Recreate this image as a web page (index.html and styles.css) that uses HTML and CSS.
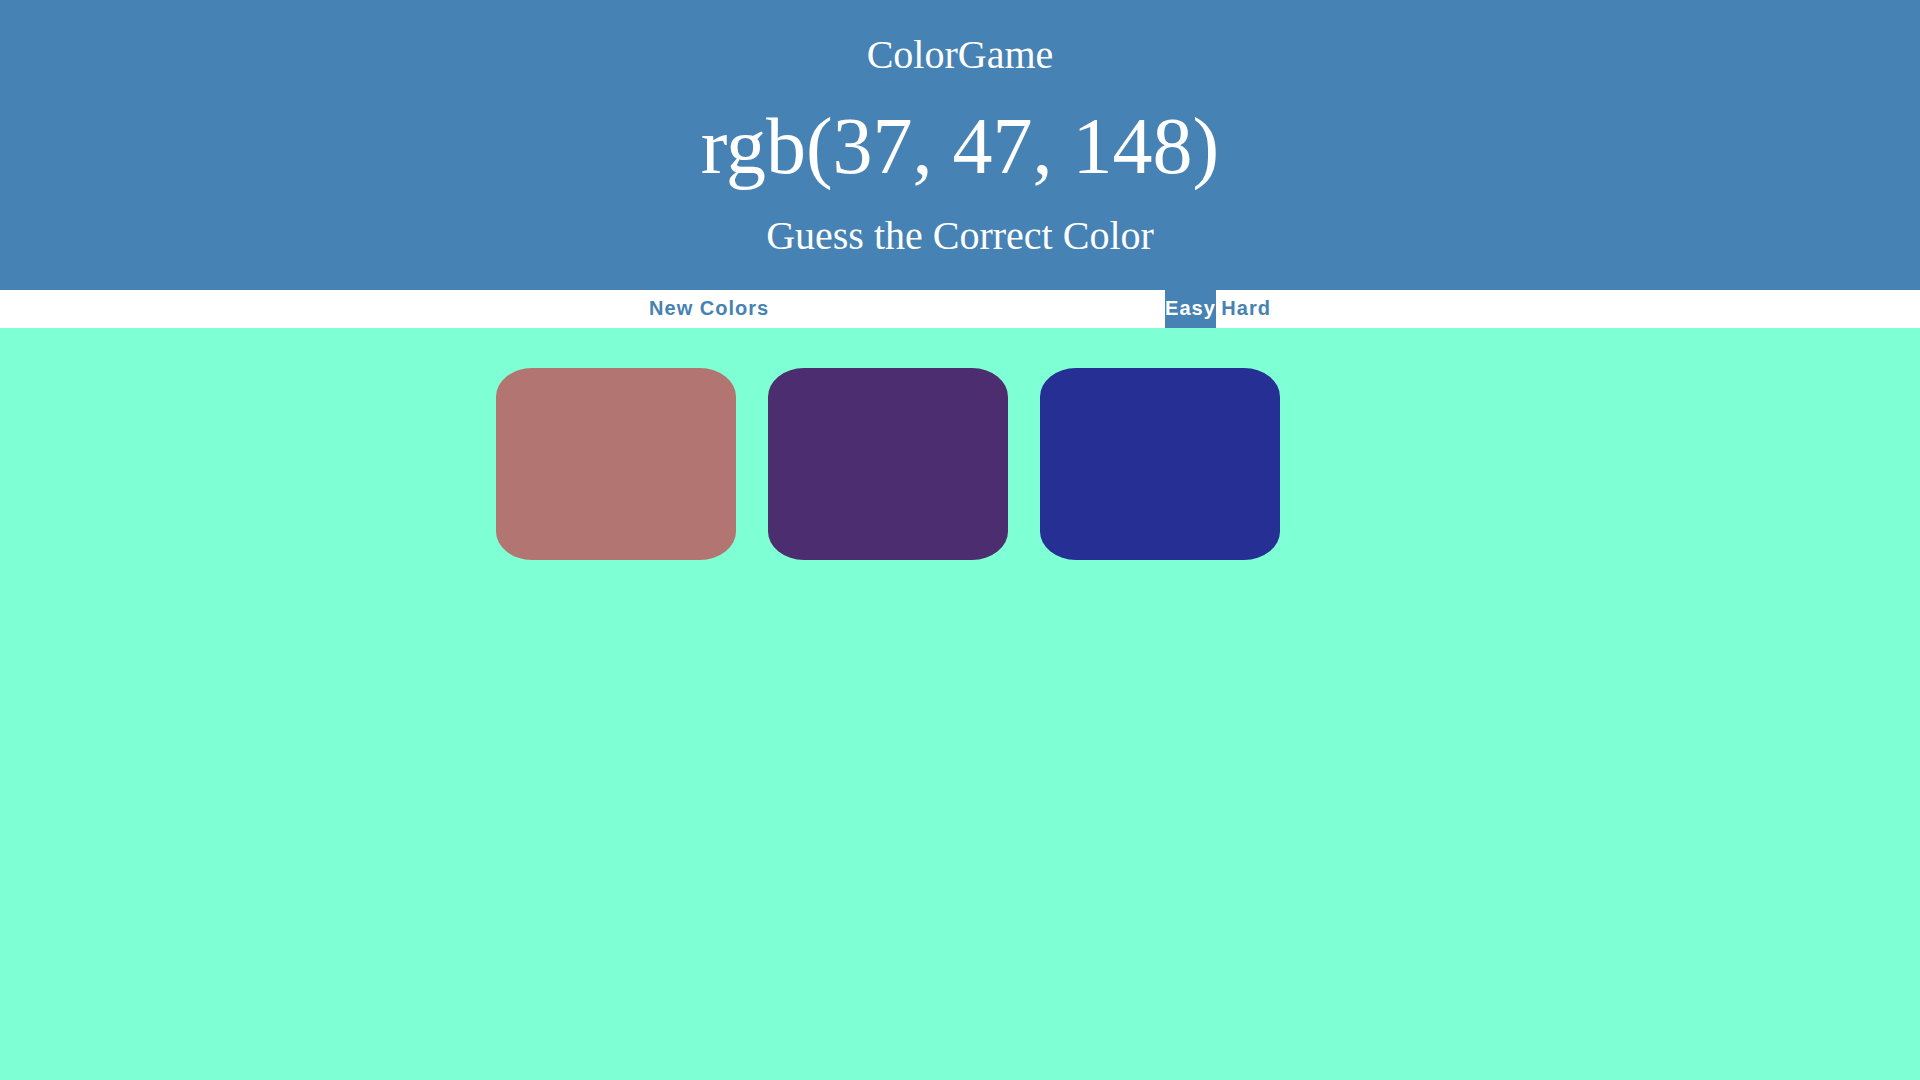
FILE: index.html
```html
<!DOCTYPE html>
<html>
<head>
<meta charset="utf-8">
<title>ColorGame</title>
<link rel="stylesheet" href="styles.css">
</head>
<body>
<header class="header">
  <div class="title">ColorGame</div>
  <div class="rgb">rgb(37, 47, 148)</div>
  <div class="subtitle">Guess the Correct Color</div>
</header>
<nav class="stripe">
  <button class="btn">New Colors</button>
  <span class="message"></span>
  <button class="btn selected">Easy</button>
  <button class="btn">Hard</button>
</nav>
<main class="container">
  <div class="square sq1"></div>
  <div class="square sq2"></div>
  <div class="square sq3"></div>
</main>
</body>
</html>
```
FILE: styles.css
```css
html, body {
  margin: 0;
  padding: 0;
}
body {
  background: #7fffd4;
  font-family: "Liberation Serif", "Times New Roman", serif;
}
.header {
  background: #4682b4;
  color: #fff;
  text-align: center;
  padding: 32px 0 34px;
  height: 224px;
  display: flex;
  flex-direction: column;
  align-items: center;
  gap: 20px;
}
.title {
  font-size: 40px;
  line-height: 46px;
}
.rgb {
  font-size: 80px;
  line-height: 92px;
  margin-top: 2px;
}
.subtitle {
  font-size: 40px;
  line-height: 46px;
  margin-top: 1px;
}
.stripe {
  background: #fff;
  height: 38px;
  display: flex;
  justify-content: center;
  align-items: stretch;
}
.btn {
  border: none;
  background: none;
  padding: 0 0 2px;
  margin: 0;
  font-family: "Liberation Sans", Arial, sans-serif;
  font-weight: 700;
  font-size: 20px;
  letter-spacing: 1px;
  color: #4682b4;
  height: 38px;
  cursor: pointer;
}
.btn + .btn {
  margin-left: 5.5px;
}
.message {
  display: inline-block;
  width: 396px;
}
.selected {
  background: #4682b4;
  color: #fff;
}
.container {
  width: 50%;
  margin: 24px 0 0 25%;
  display: flex;
}
.square {
  width: 25%;
  padding-bottom: 20%;
  margin: 16px;
  border-radius: 15%;
}
.sq1 { background: rgb(179, 117, 113); }
.sq2 { background: rgb(76, 46, 112); }
.sq3 { background: rgb(37, 47, 148); }
```
